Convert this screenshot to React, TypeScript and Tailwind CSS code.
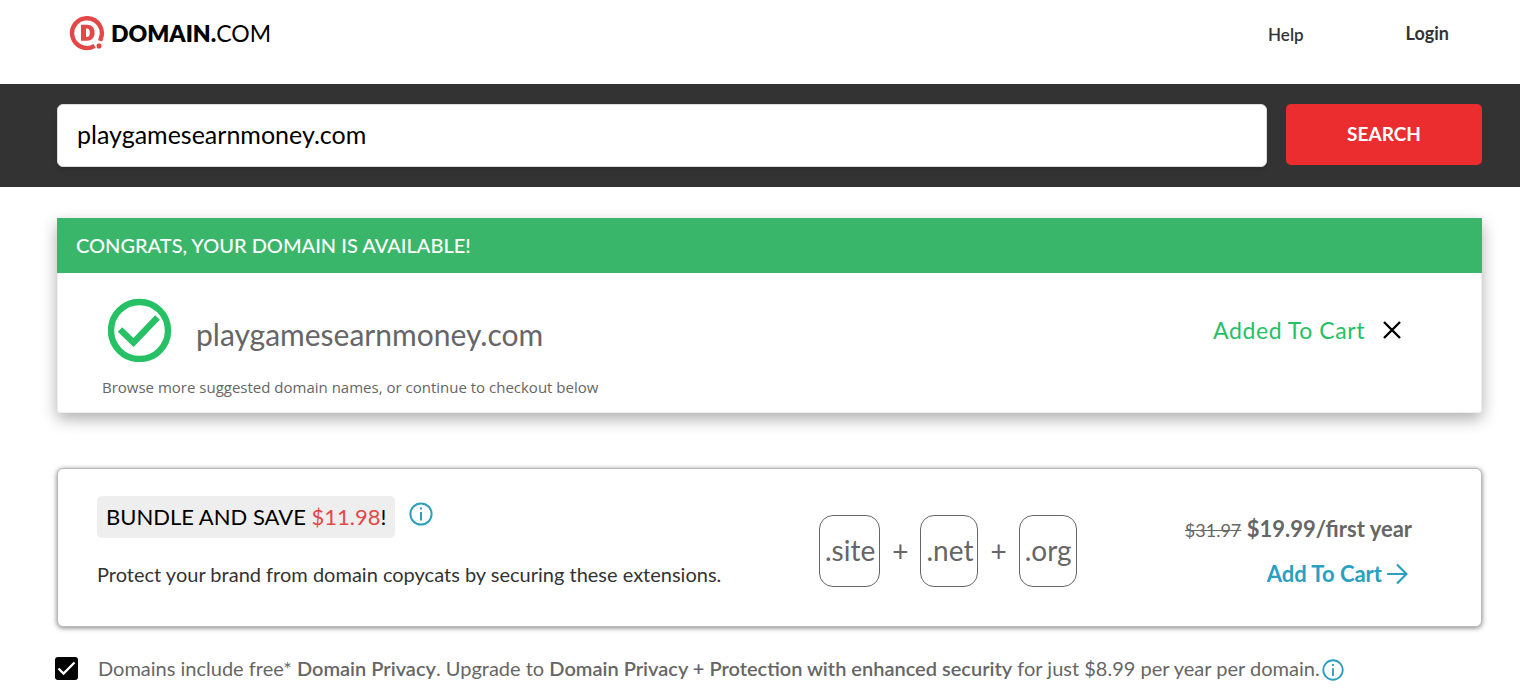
import React from 'react';

interface IconProps {
  className?: string;
}

const extensions = ['.site', '.net', '.org'];

const LogoMark: React.FC<IconProps> = ({ className }) => (
  <svg className={className} viewBox="0 0 36 36" fill="none" aria-hidden="true">
    <path d="M25.6 30.9A14.9 14.9 0 1 1 31.8 23.6L31.2 25.8" stroke="#e34848" strokeWidth="4.4" />
    <path
      d="M12 9.8h6c4.8 0 7.6 3.1 7.6 8s-2.8 8-7.6 8h-6zM17 13.6v8.4h.8c2.1 0 3-1.4 3-4.2s-.9-4.2-3-4.2z"
      fill="#e34848"
      fillRule="evenodd"
    />
    <rect x="27.6" y="28.6" width="4.8" height="4.8" rx="1.6" fill="#e34848" />
  </svg>
);

const CheckCircle: React.FC<IconProps> = ({ className }) => (
  <svg className={className} viewBox="0 0 64 64" fill="none" stroke="#26c165" aria-hidden="true">
    <circle cx="31.5" cy="32.5" r="28.5" strokeWidth="6.4" />
    <path d="M12 31.5 L25.5 44.5 L49.5 19.5" strokeWidth="6.4" />
  </svg>
);

const InfoIcon: React.FC<IconProps> = ({ className }) => (
  <svg className={className} viewBox="0 0 24 24" fill="none" stroke="#2a9fc0" aria-hidden="true">
    <circle cx="12" cy="12" r="10.6" strokeWidth="2" />
    <path d="M12 10v8.5M12 5.5v2" strokeWidth="2" />
  </svg>
);

const Header = () => (
  <header className="flex h-[84px] items-start justify-between pt-[15px] pr-[71px] pl-[69px]">
    <a href="#" className="flex items-center gap-[6px] text-[23px] leading-9 text-black">
      <LogoMark className="size-9" />
      <span>
        <span className="font-extrabold">DOMAIN.</span>COM
      </span>
    </a>
    <nav className="flex items-start gap-[102px] text-[#333]">
      <a href="#" className="pt-1 text-[17px] leading-8 font-semibold">Help</a>
      <a href="#" className="pt-[2px] text-[18px] leading-8 font-bold">Login</a>
    </nav>
  </header>
);

const SearchBar = () => (
  <form className="flex h-[103px] items-start gap-[19px] bg-[#333] pt-5 pr-[38px] pl-[57px]">
    <input
      type="text"
      aria-label="Domain name"
      defaultValue="playgamesearnmoney.com"
      className="h-[63px] min-w-0 flex-1 rounded-md border border-[#ddd] bg-white px-[19px] pb-[3px] text-[25px] text-black shadow-md"
    />
    <button type="button" className="h-[61px] w-[196px] rounded-[5px] bg-[#eb2d2f] text-[19px] font-bold text-white">
      SEARCH
    </button>
  </form>
);

const DomainResult = () => (
  <section className="rounded-b-sm shadow-[0_6px_16px_rgba(0,0,0,0.32)]">
    <h2 className="bg-[#3ab66b] px-[19px] text-[20px] leading-[55px] font-medium text-white">
      CONGRATS, YOUR DOMAIN IS AVAILABLE!
    </h2>
    <div className="h-[140px] rounded-b-sm border border-t-0 border-[#eee] bg-white pt-[25px] pr-[79px] pl-11">
      <div className="flex items-center justify-between">
        <div className="flex items-center gap-6 pl-[6px]">
          <CheckCircle className="size-16" />
          <span className="pt-2 text-[30px] leading-[54px] text-[#666]">playgamesearnmoney.com</span>
        </div>
        <div className="flex items-center gap-[17px]">
          <span className="text-[23px] tracking-wide text-[#26c165]">Added To Cart</span>
          <button type="button" aria-label="Remove from cart">
            <svg className="size-5" viewBox="0 0 20 20" fill="none" stroke="#000" strokeWidth="2.4" aria-hidden="true">
              <path d="M2 2l16 16M18 2L2 18" />
            </svg>
          </button>
        </div>
      </div>
      <p className="mt-[13px] font-['Open_Sans',sans-serif] text-[15px] leading-6 text-[#666]">
        Browse more suggested domain names, or continue to checkout below
      </p>
    </div>
  </section>
);

const BundleOffer = () => (
  <section className="mt-[55px] flex h-[159px] items-start rounded-md border border-[#bbb] bg-white pr-[69px] pl-[39px] shadow-[0_1px_5px_rgba(0,0,0,0.5)]">
    <div className="w-[722px] pt-[27px]">
      <div className="flex items-start gap-[14px]">
        <h3 className="rounded-[5px] bg-[#eee] px-[9px] text-[22px] leading-[42px] text-black">
          BUNDLE AND SAVE <span className="text-[#e34848]">$11.98</span>!
        </h3>
        <InfoIcon className="mt-[6px] size-6" />
      </div>
      <p className="mt-6 text-[20px] leading-6 text-[#333]">
        Protect your brand from domain copycats by securing these extensions.
      </p>
    </div>
    <div className="flex items-center gap-3 pt-[46px] text-[28px] text-[#666]">
      {extensions.map((extension, index) => (
        <React.Fragment key={extension}>
          {index > 0 && <span>+</span>}
          <span className="rounded-[14px] border border-[#666] pr-1 pb-[2px] pl-[5px] leading-[68px]">{extension}</span>
        </React.Fragment>
      ))}
    </div>
    <div className="ml-auto flex flex-col items-end pt-[42px]">
      <p className="text-[22px] leading-9 font-bold text-[#666]">
        <s className="text-[18px] font-normal">$31.97</s> $19.99/first year
      </p>
      <button type="button" className="mt-2 mr-1 flex items-center gap-1 text-[22px] leading-9 font-bold text-[#2a9fc0]">
        Add To Cart
        <svg className="size-[22px]" viewBox="0 0 22 22" fill="none" stroke="currentColor" strokeWidth="2.2" aria-hidden="true">
          <path d="M1 11h19M11 1.5l9.5 9.5l-9.5 9.5" />
        </svg>
      </button>
    </div>
  </section>
);

const PrivacyOption = () => (
  <div className="mt-[25px] flex items-center">
    <span className="-ml-[2px] grid">
      <input
        id="privacy"
        type="checkbox"
        defaultChecked
        className="peer col-start-1 row-start-1 size-[23px] appearance-none rounded-[3px] border-2 border-black checked:bg-black"
      />
      <svg
        className="pointer-events-none invisible col-start-1 row-start-1 size-[23px] peer-checked:visible"
        viewBox="0 0 23 23"
        fill="none"
        stroke="#fff"
        strokeWidth="2.3"
        aria-hidden="true"
      >
        <path d="M3.5 11.5l5 5L19.5 5.5" />
      </svg>
    </span>
    <label htmlFor="privacy" className="pl-5 text-[20px] leading-8 text-[#666]">
      Domains include free* <span className="font-semibold">Domain Privacy</span>. Upgrade to{' '}
      <span className="font-semibold">Domain Privacy + Protection with enhanced security</span> for just $8.99 per year per domain.
    </label>
    <InfoIcon className="mt-1 ml-[2px] size-[22px]" />
  </div>
);

const App: React.FC = () => (
  <div className="bg-white font-['Lato',sans-serif]">
    <Header />
    <SearchBar />
    <main className="pt-[31px] pr-[38px] pl-[57px]">
      <DomainResult />
      <BundleOffer />
      <PrivacyOption />
    </main>
  </div>
);

export default App;
